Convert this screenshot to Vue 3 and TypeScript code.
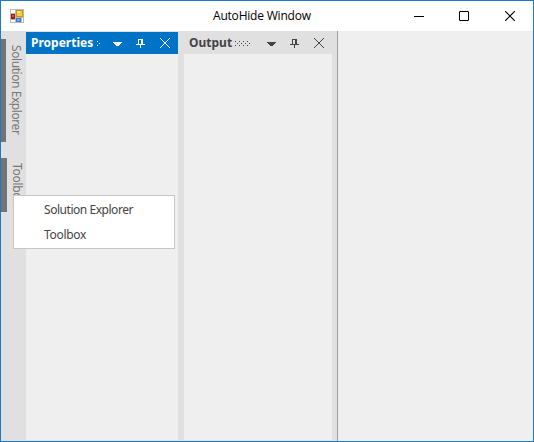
<script setup lang="ts">
interface Pane {
  title: string
  kind: string
  grip: number
}

const panes: Pane[] = [
  { title: 'Properties', kind: 'active', grip: 4 },
  { title: 'Output', kind: 'idle', grip: 16 },
]
const hidden: string[] = ['Solution Explorer', 'Toolbox']

function dots(width: number): { x: number; y: number }[] {
  const out: { x: number; y: number }[] = []
  for (let y = 0; y < 5; y += 2) {
    for (let x = y === 2 ? 2 : 0; x < width; x += 4) out.push({ x, y })
  }
  return out
}
</script>

<template>
  <div class="window">
    <header class="titlebar">
      <svg class="logo" width="14" height="14" viewBox="0 0 14 14" shape-rendering="crispEdges">
        <rect width="14" height="14" fill="#b9b9b9" />
        <path d="M1 1h4v3H1zM1 11h4v2H1zM12 9h1v4h-1z" fill="#fff" />
        <rect x="6" y="1" width="7" height="7" fill="#c8960f" />
        <rect x="7" y="2" width="5" height="5" fill="#f9cd3e" />
        <rect x="7" y="2" width="3" height="2" fill="#ffe486" />
        <rect x="1" y="5" width="4" height="5" fill="#991b12" />
        <rect x="2" y="6" width="2" height="2" fill="#dc5545" />
        <rect x="6" y="9" width="5" height="4" fill="#3d78d2" />
        <rect x="7" y="10" width="3" height="2" fill="#75a9f4" />
      </svg>
      <span class="caption">AutoHide Window</span>
      <div class="controls">
        <svg width="10" height="10" viewBox="0 0 10 10"><path d="M0 5.5h10" stroke="#000" /></svg>
        <svg width="10" height="10" viewBox="0 0 10 10"><path d="M.5.5h9v9h-9z" fill="none" stroke="#000" /></svg>
        <svg width="10" height="10" viewBox="0 0 10 10"><path d="M0 0l10 10M10 0L0 10" stroke="#000" stroke-width="1.15" /></svg>
      </div>
    </header>
    <div class="body">
      <aside class="rail">
        <div v-for="(name, i) in hidden" :key="name" class="tab" :class="'tab' + i">
          <span class="bar"></span>
          <span class="label">{{ name }}</span>
        </div>
      </aside>
      <main class="dock">
        <section v-for="p in panes" :key="p.title" class="pane" :class="p.kind">
          <div class="head">
            <span class="name">{{ p.title }}</span>
            <svg class="grip" :width="p.grip" height="5" shape-rendering="crispEdges">
              <rect v-for="d in dots(p.grip)" :key="d.x + '-' + d.y" :x="d.x" :y="d.y" width="1" height="1" fill="currentColor" />
            </svg>
            <svg class="tools" width="60" height="12" viewBox="0 0 60 12">
              <path d="M2 5h9v1h-1v1H9v1H8v1H5V8H4V7H3V6H2z" fill="currentColor" shape-rendering="crispEdges" />
              <path d="M27 2h5v5h2v1h-4v3h-1V8h-4V7h2zM28 3v4h2V3z" fill="currentColor" fill-rule="evenodd" shape-rendering="crispEdges" />
              <path d="M49 1l10 10M59 1L49 11" stroke="currentColor" fill="none" />
            </svg>
          </div>
        </section>
      </main>
      <div class="client"></div>
    </div>
    <ul class="menu">
      <li v-for="(name, i) in hidden" :key="name" :class="'item' + i">{{ name }}</li>
    </ul>
  </div>
</template>

<style>
body {
  margin: 0;
  overflow: hidden;
}
</style>

<style scoped>
.window {
  position: relative;
  box-sizing: border-box;
  width: 534px;
  height: 442px;
  border: 1px solid #1979ca;
  background: #efefef;
  display: flex;
  flex-direction: column;
  font-family: "Noto Sans", "Open Sans", sans-serif;
  font-size: 12px;
}
.titlebar {
  height: 30px;
  flex: none;
  background: #fff;
  display: flex;
  align-items: center;
}
.logo {
  margin: 0 0 1px 9px;
}
.caption {
  margin-left: 189px;
  width: 100px;
  color: #000;
  font-family: "Open Sans", sans-serif;
  line-height: 16px;
  letter-spacing: -0.2px;
  white-space: nowrap;
}
.controls {
  display: flex;
  gap: 36px;
  margin: 0 0 1px auto;
  padding-right: 18px;
}
.controls svg:first-child {
  margin-right: -1px;
}
.body {
  flex: 1;
  display: flex;
  min-height: 0;
}
.rail {
  width: 25px;
  background: #e0e0e0;
  padding-top: 8px;
  box-sizing: border-box;
}
.tab {
  display: flex;
  height: 103px;
  margin-bottom: 16px;
}
.tab1 {
  height: 54px;
}
.bar {
  width: 5px;
  background: #747474;
}
.tab1 .bar {
  width: 6px;
}
.label {
  writing-mode: vertical-rl;
  width: 16px;
  line-height: 16px;
  margin-left: 2px;
  padding-top: 6px;
  box-sizing: border-box;
  color: #777;
  letter-spacing: -0.43px;
  white-space: nowrap;
}
.tab1 .label {
  padding-top: 5px;
  letter-spacing: -0.3px;
}
.dock {
  width: 311px;
  box-sizing: border-box;
  padding: 1px 5px 1px 0;
  background: #e0e0e0;
  display: flex;
  gap: 6px;
}
.pane {
  background: #efefef;
}
.active {
  width: 152px;
}
.idle {
  width: 148px;
}
.head {
  height: 22px;
  display: flex;
  align-items: center;
  box-sizing: border-box;
  padding: 0 7px 0 5px;
  color: #444;
  background: #e0e0e0;
}
.active .head {
  color: #fff;
  background: #0173c7;
}
.name {
  font-weight: 700;
  line-height: 16px;
}
.grip {
  margin-left: 3px;
}
.active .grip {
  margin-left: 4px;
}
.tools {
  margin-left: auto;
}
.client {
  flex: 1;
  border-left: 1px solid #a0a0a0;
}
.menu {
  position: absolute;
  left: 12px;
  top: 194px;
  width: 162px;
  height: 54px;
  box-sizing: border-box;
  margin: 0;
  padding: 1px 0 1px 30px;
  border: 1px solid #c6c6c6;
  background: #fff;
  list-style: none;
  color: #444;
}
.menu li {
  line-height: 25px;
  letter-spacing: -0.46px;
  white-space: nowrap;
}
.menu .item1 {
  letter-spacing: -0.3px;
}
</style>
